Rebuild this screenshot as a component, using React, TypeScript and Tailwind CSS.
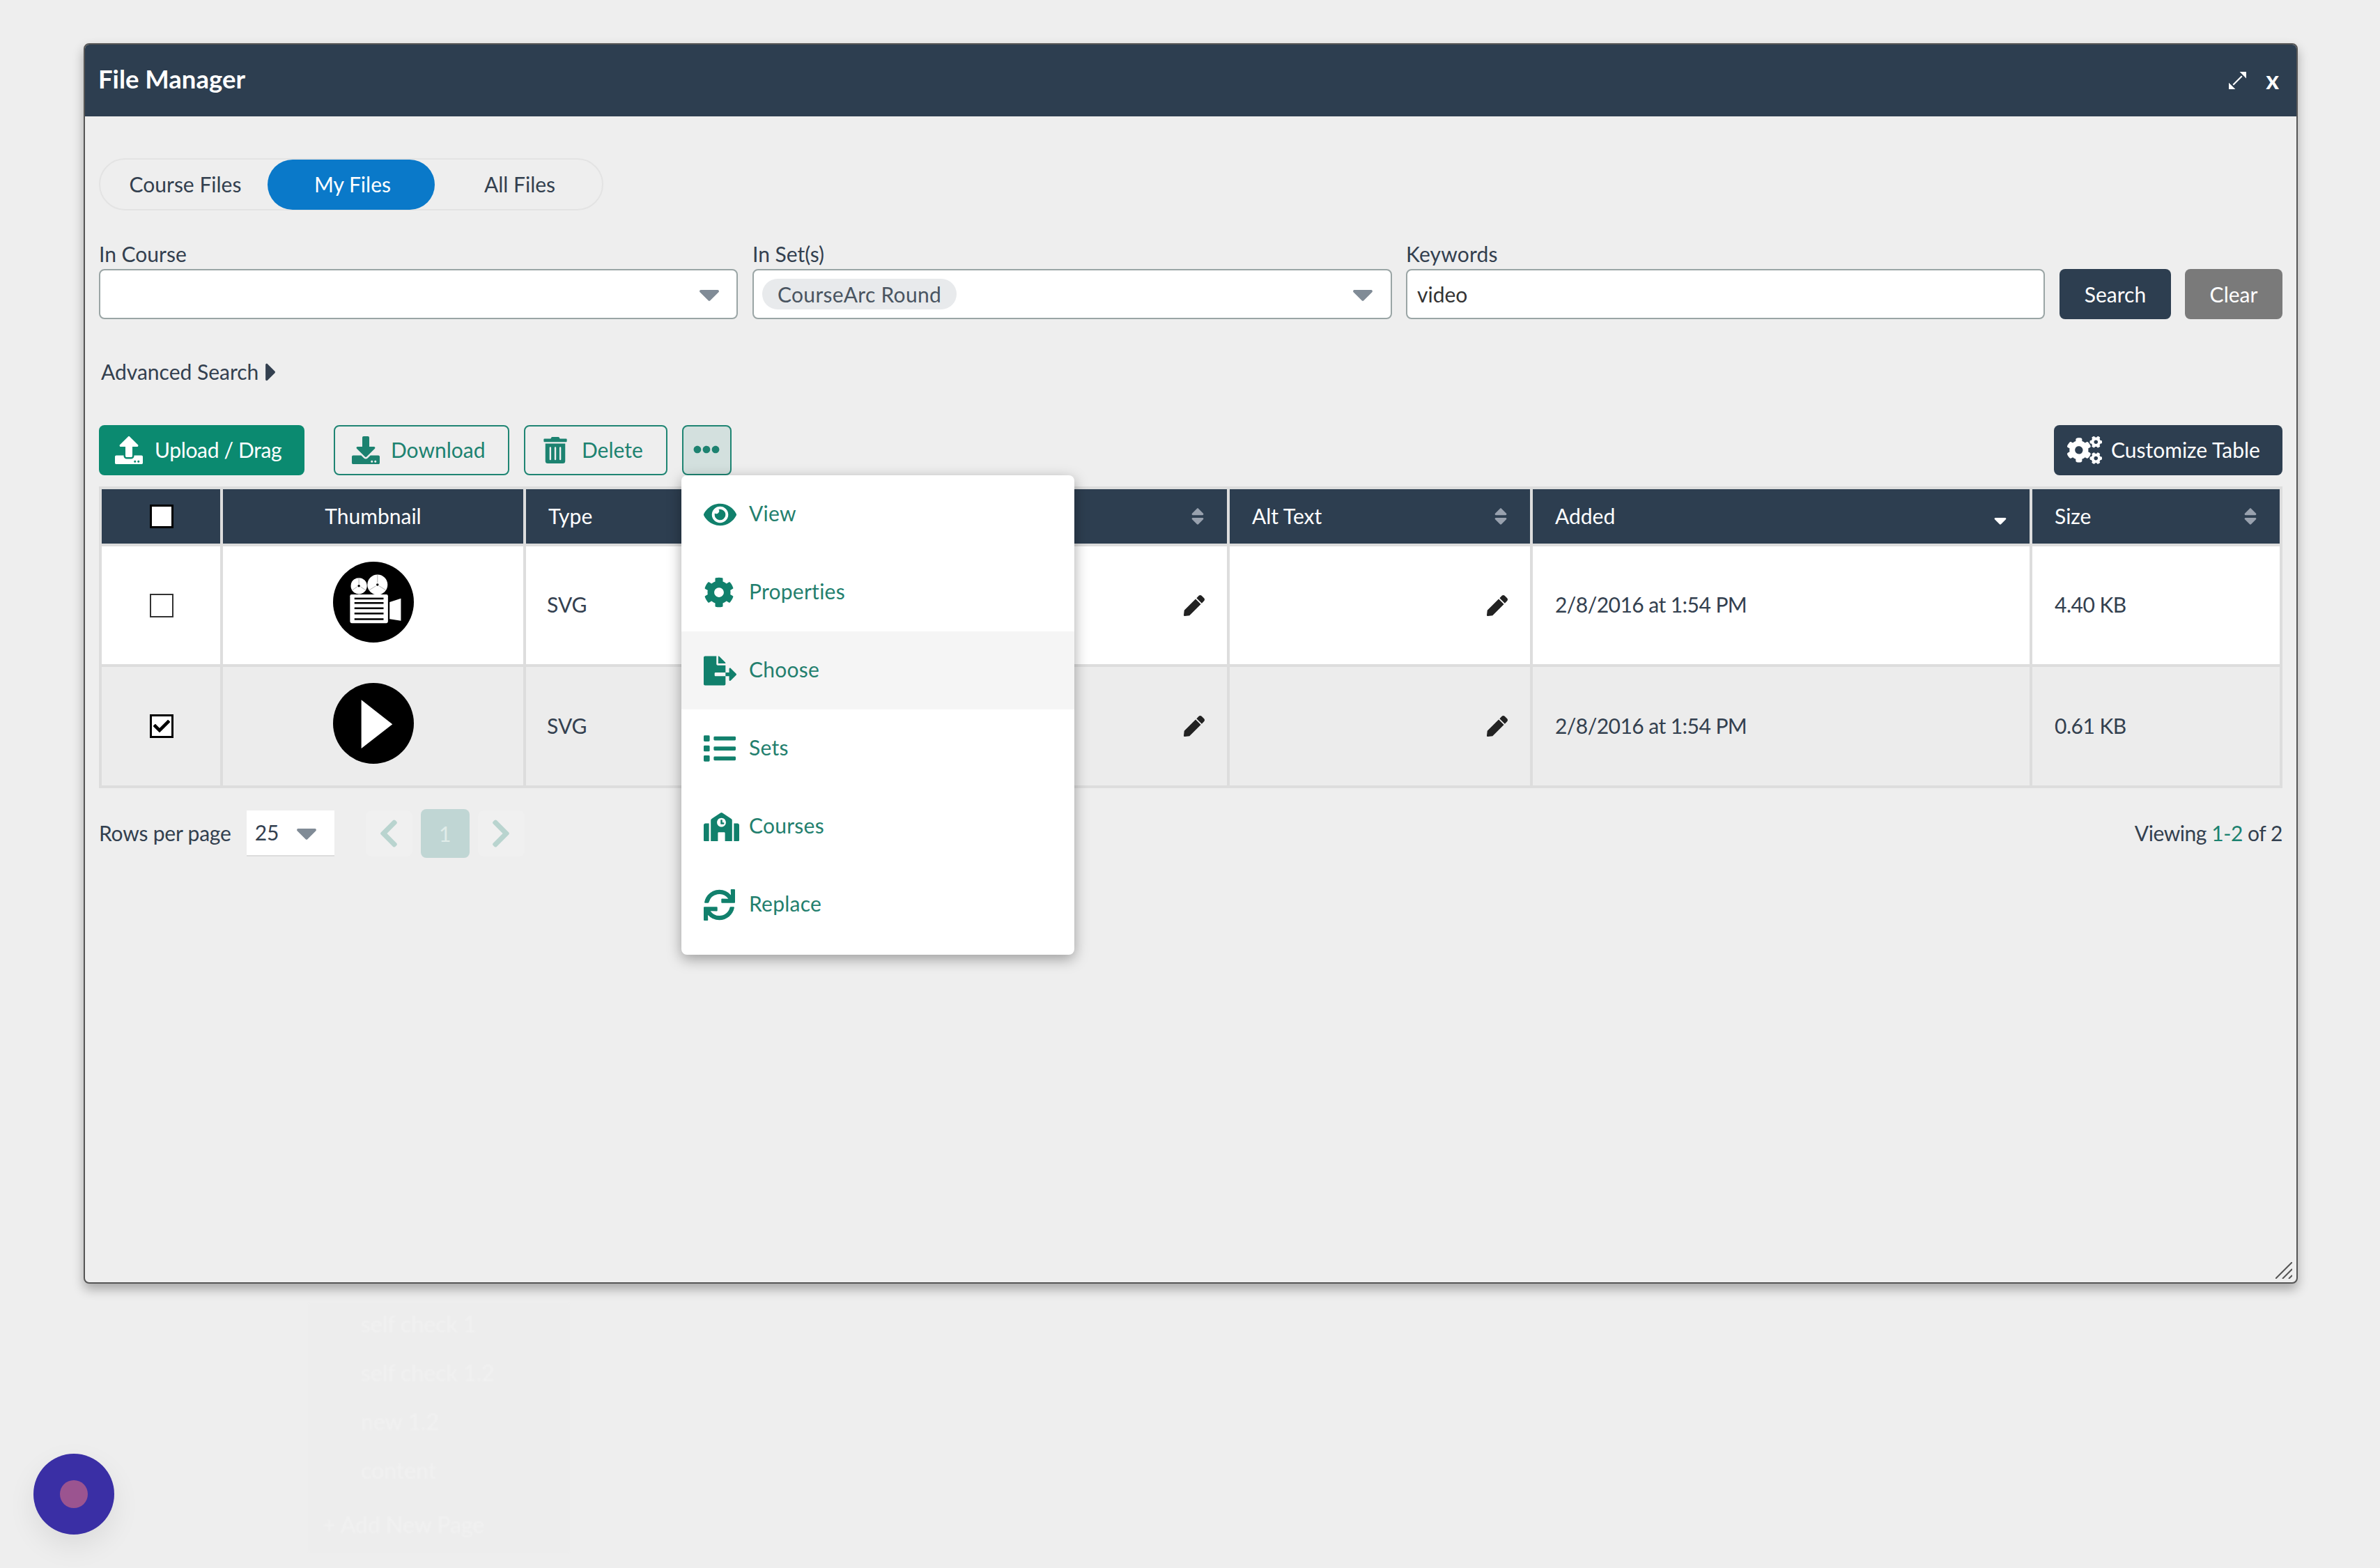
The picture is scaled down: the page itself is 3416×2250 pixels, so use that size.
import {
  FaCaretDown,
  FaCaretRight,
  FaCheck,
  FaChevronLeft,
  FaChevronRight,
  FaCog,
  FaCogs,
  FaDownload,
  FaEllipsisH,
  FaEye,
  FaFileExport,
  FaList,
  FaPen,
  FaSchool,
  FaSort,
  FaSortDown,
  FaSync,
  FaTrashAlt,
  FaUpload,
} from "react-icons/fa";

const menuItems = [
  { label: "View", icon: <FaEye size={47} /> },
  { label: "Properties", icon: <FaCog size={44} /> },
  { label: "Choose", icon: <FaFileExport size={47} />, active: true },
  { label: "Sets", icon: <FaList size={46} /> },
  { label: "Courses", icon: <FaSchool size={51} /> },
  { label: "Replace", icon: <FaSync size={45} /> },
];

const ghostPages = ["self check 1", "self check 1.2", "new 1.2", "content"];

function CameraThumb() {
  return (
    <svg viewBox="0 0 100 100" className="w-[116px] h-[116px]">
      <circle cx="50" cy="50" r="50" fill="#000" />
      <circle cx="32" cy="30" r="10" fill="#fff" />
      <circle cx="55" cy="28.5" r="12.5" fill="#fff" />
      <circle cx="32" cy="30" r="1.5" fill="#000" />
      <circle cx="55" cy="28.5" r="1.5" fill="#000" />
      <path d="M32 20v8M24 35l6-4M40 35l-6-4M55 16v10M45 35l8-5M65 35l-8-5" stroke="#777" strokeWidth="0.5" />
      <rect x="21" y="40.5" width="47" height="35.5" rx="2" fill="#fff" />
      <rect x="26.5" y="44.5" width="36" height="2.2" fill="#000" />
      <rect x="26.5" y="50" width="36" height="2.2" fill="#000" />
      <rect x="26.5" y="56.5" width="36" height="2.2" fill="#000" />
      <rect x="26.5" y="63" width="36" height="2.2" fill="#000" />
      <rect x="26.5" y="70" width="36" height="2.2" fill="#000" />
      <polygon points="70,50 84,45.5 84,73 70,71" fill="#fff" />
    </svg>
  );
}

function PlayThumb() {
  return (
    <svg viewBox="0 0 100 100" className="w-[116px] h-[116px]">
      <circle cx="50" cy="50" r="50" fill="#000" />
      <polygon points="35,21 73.5,51 35,81" fill="#fff" />
    </svg>
  );
}

function Checkbox({ checked, header }: { checked?: boolean; header?: boolean }) {
  return (
    <span
      className={`flex items-center justify-center w-[34px] h-[34px] ml-[2px] ${
        header || checked ? "bg-white border-[3px] border-black" : "border-2 border-[#333333]"
      }`}
    >
      {checked && <FaCheck size={24} className="text-black" />}
    </span>
  );
}

function HeaderCell({ label, center, sorted, noSort }: { label?: string; center?: boolean; sorted?: boolean; noSort?: boolean }) {
  return (
    <div className={`flex items-center bg-[#2d3e50] text-white text-[30px] ${center ? "justify-center" : "justify-between pl-[32px] pr-[27px]"}`}>
      <span className="pb-[2px]">{label}</span>
      {!center && !noSort && (sorted ? <FaSortDown size={30} className="text-white" /> : <FaSort size={30} className="text-[#98a1ae]" />)}
    </div>
  );
}

function Row({ bg, thumb, checked, added, size }: { bg: string; thumb: React.ReactNode; checked?: boolean; added: string; size: string }) {
  const cell = `flex items-center ${bg} text-[30px] text-[#33404f]`;
  return (
    <>
      <div className={`${cell} justify-center`}>
        <Checkbox checked={checked} />
      </div>
      <div className={`${cell} justify-center pb-[9px]`}>{thumb}</div>
      <div className={`${cell} pl-[30px]`}>
        <span className="pb-[2px]">SVG</span>
      </div>
      <div className={`${cell} justify-end pr-[32px]`}>
        <FaPen size={30} className="text-[#222222]" />
      </div>
      <div className={`${cell} justify-end pr-[32px]`}>
        <FaPen size={30} className="text-[#222222]" />
      </div>
      <div className={`${cell} pl-[32px]`}>
        <span className="pb-[2px] tracking-[-0.55px]">{added}</span>
      </div>
      <div className={`${cell} pl-[32px]`}>
        <span className="pb-[2px] tracking-[-0.5px]">{size}</span>
      </div>
    </>
  );
}

export default function App() {
  return (
    <div className="relative w-[3416px] h-[2250px] overflow-hidden bg-[#eeeeee] font-[Lato,sans-serif] pt-[62px] pl-[120px]">
      {/* ventana */}
      <div className="relative w-[3178px] h-[1780px] bg-[#eeeeee] border-2 border-[#555555] rounded-[8px] overflow-hidden shadow-[0_8px_16px_rgba(0,0,0,0.3)]">
        <div className="flex items-center justify-between h-[103px] bg-[#2d3e50] pl-[19px] pr-[25px] text-white">
          <h1 className="text-[36.5px] font-bold pb-[4px]">File Manager</h1>
          <div className="flex items-center gap-[28px]">
            <svg viewBox="0 0 24 24" className="w-[25px] h-[25px]">
              <path d="M6 18L18 6" stroke="#fff" strokeWidth="2" />
              <path d="M24 0H15L24 9ZM0 24H9L0 15Z" fill="#fff" />
            </svg>
            <span className="text-[36px] font-bold leading-none pb-[4px]">x</span>
          </div>
        </div>

        <div className="px-[20px]">
          {/* tabs */}
          <div className="flex w-[724px] h-[75px] mt-[60px] items-center border-2 border-[#e3e3e3] rounded-full text-[30px] text-[#33404f]">
            <span className="flex-1 text-center pl-[4px]">Course Files</span>
            <span className="flex items-center justify-center flex-1 h-[72px] pl-[4px] bg-[#0a79c9] text-white rounded-full">My Files</span>
            <span className="flex-1 text-center pl-[4px]">All Files</span>
          </div>

          {/* filtros */}
          <div className="flex items-end mt-[46px] text-[30px] text-[#33404f]">
            <div className="w-[917px]">
              <label className="block h-[38px] leading-[33px]">In Course</label>
              <div className="flex items-center justify-end h-[72px] bg-white border-2 border-[#9aa5a5] rounded-[8px] pr-[15px]">
                <FaCaretDown size={48} className="text-[#808b96]" />
              </div>
            </div>
            <div className="w-[918px] ml-[21px]">
              <label className="block h-[38px] leading-[33px]">In Set(s)</label>
              <div className="flex items-center justify-between h-[72px] bg-white border-2 border-[#9aa5a5] rounded-[8px] pl-[12px] pr-[16px]">
                <span className="flex items-center h-[44px] px-[22px] bg-[#e8eaec] rounded-full text-[#4a5561] tracking-[0.3px]">CourseArc Round</span>
                <FaCaretDown size={48} className="text-[#808b96]" />
              </div>
            </div>
            <div className="w-[917px] ml-[20px]">
              <label className="block h-[38px] leading-[33px] tracking-[0.2px]">Keywords</label>
              <div className="flex items-center h-[72px] bg-white border-2 border-[#9aa5a5] rounded-[8px] pl-[14px] text-[#333333]">video</div>
            </div>
            <button className="w-[160px] h-[72px] ml-[21px] bg-[#2d3e50] text-white rounded-[8px]">Search</button>
            <button className="w-[140px] h-[72px] ml-[20px] bg-[#7a7a7a] text-white rounded-[8px]">Clear</button>
          </div>

          {/* busqueda avanzada */}
          <div className="flex items-center h-[40px] mt-[56px] ml-[3px] text-[30px] text-[#33404f]">
            <span className="pb-[2px]">Advanced Search</span>
            <FaCaretRight size={42} className="-ml-[3px]" />
          </div>

          {/* botones */}
          <div className="flex items-center h-[72px] mt-[56px] text-[30px]">
            <button className="flex items-center gap-[17px] w-[295px] h-[72px] pl-[23px] bg-[#0b8a70] text-white rounded-[8px]">
              <FaUpload size={40} />
              <span className="pb-[2px] tracking-[-0.35px]">Upload / Drag</span>
            </button>
            <button className="flex items-center gap-[16px] w-[252px] h-[72px] ml-[42px] pl-[24px] border-2 border-[#1f8573] text-[#1c8270] rounded-[8px]">
              <FaDownload size={40} />
              <span className="pb-[2px]">Download</span>
            </button>
            <button className="flex items-center gap-[19px] w-[206px] h-[72px] ml-[21px] pl-[24px] border-2 border-[#1f8573] text-[#1c8270] rounded-[8px]">
              <FaTrashAlt size={38} />
              <span className="pb-[2px]">Delete</span>
            </button>
            <button className="flex items-center justify-center w-[71px] h-[72px] ml-[21px] pr-[2px] pb-[2px] bg-[#d3e0de] border-2 border-[#1f8573] text-[#1c8270] rounded-[8px]">
              <FaEllipsisH size={38} />
            </button>
            <button className="flex items-center gap-[13px] w-[328px] h-[72px] ml-auto pl-[19px] bg-[#2d3e50] text-white rounded-[8px]">
              <FaCogs size={50} />
              <span className="pb-[2px]">Customize Table</span>
            </button>
          </div>

          {/* tabla */}
          <div className="grid grid-cols-[170px_431px_345px_657px_431px_713px_355px] grid-rows-[78px_169px_170px] gap-[4px] w-[3134px] mt-[16px] p-[4px] bg-[#dddddd]">
            <div className="flex items-center justify-center bg-[#2d3e50]">
              <Checkbox header />
            </div>
            <HeaderCell label="Thumbnail" center />
            <HeaderCell label="Type" noSort />
            <HeaderCell label="Title" />
            <HeaderCell label="Alt Text" />
            <HeaderCell label="Added" sorted />
            <HeaderCell label="Size" />
            <Row bg="bg-white" thumb={<CameraThumb />} added="2/8/2016 at 1:54 PM" size="4.40 KB" />
            <Row bg="bg-[#ececec]" thumb={<PlayThumb />} checked added="2/8/2016 at 1:54 PM" size="0.61 KB" />
          </div>

          {/* paginacion */}
          <div className="flex items-center h-[70px] mt-[30px] text-[30px] text-[#33404f]">
            <span className="pb-[2px] tracking-[-0.2px]">Rows per page</span>
            <div className="flex items-center justify-between w-[126px] h-[66px] ml-[22px] pl-[12px] pr-[16px] bg-white border-b-2 border-[#dddddd]">
              <span className="pb-[2px]">25</span>
              <FaCaretDown size={48} className="text-[#808b96]" />
            </div>
            <div className="flex items-center justify-center w-[67px] h-[66px] ml-[45px] bg-[#f0f0f0] rounded-[8px] text-[#b9d4cf]">
              <FaChevronLeft size={46} />
            </div>
            <div className="flex items-center justify-center w-[70px] h-[70px] ml-[12px] bg-[#c0d6d4] rounded-[8px] text-[#e0ece9]">1</div>
            <div className="flex items-center justify-center w-[67px] h-[66px] ml-[12px] bg-[#f0f0f0] rounded-[8px] text-[#b9d4cf]">
              <FaChevronRight size={46} />
            </div>
            <span className="ml-auto pb-[2px] tracking-[-0.45px]">
              Viewing <span className="text-[#1c8270]">1-2</span> of 2
            </span>
          </div>
        </div>

        {/* asa de redimension */}
        <svg viewBox="0 0 24 24" className="absolute right-[6px] bottom-[5px] w-[24px] h-[24px]">
          <path d="M0 24L24 0M10 24L24 10M19 24L24 19" stroke="#555555" strokeWidth="2" />
        </svg>
      </div>

      {/* menu desplegable */}
      <div className="absolute left-[978px] top-[682px] w-[564px] pb-[16px] bg-white rounded-[8px] shadow-[0_6px_20px_rgba(0,0,0,0.35)] text-[30px] text-[#237f6e]">
        {menuItems.map((item) => (
          <div key={item.label} className={`flex items-center h-[112px] pl-[32px] ${item.active ? "bg-[#f5f5f5]" : ""}`}>
            <span className="flex items-center w-[65px] text-[#11806c]">{item.icon}</span>
            <span className="pb-[4px] tracking-[0.25px]">{item.label}</span>
          </div>
        ))}
      </div>

      {/* panel de fondo, casi invisible */}
      <div className="absolute left-[443px] top-[1870px] w-[374px] h-[358px] bg-[#ededed] pt-[10px] pl-[75px] text-[32px] text-[#f1f1f1] blur-[1px]">
        {ghostPages.map((page) => (
          <div key={page} className="h-[70px] leading-[40px]">
            {page}
          </div>
        ))}
        <div className="-ml-[55px] mt-[4px]">+ Add New Page</div>
      </div>

      {/* burbuja */}
      <div className="absolute left-[48px] top-[2086px] flex items-center justify-center w-[116px] h-[116px] bg-[#3a2fa5] rounded-full shadow-[0_16px_40px_rgba(0,0,0,0.08)]">
        <div className="w-[40px] h-[40px] bg-[#9b5490] rounded-full" />
      </div>
    </div>
  );
}
